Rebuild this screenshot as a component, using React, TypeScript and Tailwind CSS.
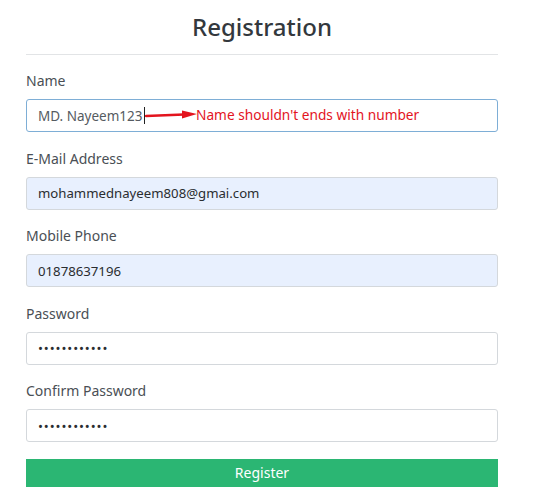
import React from 'react';

function Field({ label, value, type = 'text', autofill = false, focused = false, children }: {
  label: string; value: string; type?: string; autofill?: boolean; focused?: boolean; children?: React.ReactNode;
}) {
  return (
    <div className="mb-[16.5px]">
      <label className="block text-[14px] leading-[20px] mb-[8px] text-[#4a4f55]">{label}</label>
      <div className="relative">
        <input
          type={type}
          defaultValue={value}
          readOnly
          className={`block w-full h-[33px] px-[11px] rounded-[3px] border outline-none ${
            focused ? 'border-[#7eaed6] text-[#555b61] text-[13.5px]' : 'border-[#d4d8dc] text-[#2a2d30] text-[13.2px]'
          } ${autofill ? 'bg-[#e8f0fe]' : 'bg-white'} ${type === 'password' ? 'tracking-[0.9px]' : ''}`}
        />
        {children}
      </div>
    </div>
  );
}

export default function App() {
  return (
    <div className="w-[535px] h-[496px] bg-white overflow-hidden" style={{ fontFamily: '"Noto Sans", "Open Sans", sans-serif' }}>
      <div className="ml-[26px] w-[472px] pt-[10px]">
        <h1 className="text-center text-[24px] leading-[34px] font-medium text-[#33383d]">Registration</h1>
        <div className="mt-[10px] mb-[16px] border-t border-[#e2e4e6]" />

        <Field label="Name" value="MD. Nayeem123" focused>
          <div className="absolute left-[118px] top-[8px] w-px h-[17px] bg-[#222]" />
          <svg className="absolute left-[119px] top-[10px]" width="53" height="12" viewBox="0 0 53 12">
            <path d="M1 7 L39 5.5" stroke="#e3141e" strokeWidth="2.4" fill="none" strokeLinecap="round" />
            <path d="M37 1.5 L52 5 L37 9.5 Z" fill="#e3141e" />
          </svg>
          <span className="absolute left-[170px] top-[6px] text-[13.7px] leading-[20px] text-[#e3141e]">
            Name shouldn't ends with number
          </span>
        </Field>
        <Field label="E-Mail Address" value="mohammednayeem808@gmai.com" autofill />
        <Field label="Mobile Phone" value="01878637196" autofill />
        <Field label="Password" value="passwordabc1" type="password" />
        <Field label="Confirm Password" value="passwordabc1" type="password" />

        <button className="block w-full h-[28px] bg-[#2bb673] text-white text-[14px] leading-[28px]">Register</button>
      </div>
    </div>
  );
}
